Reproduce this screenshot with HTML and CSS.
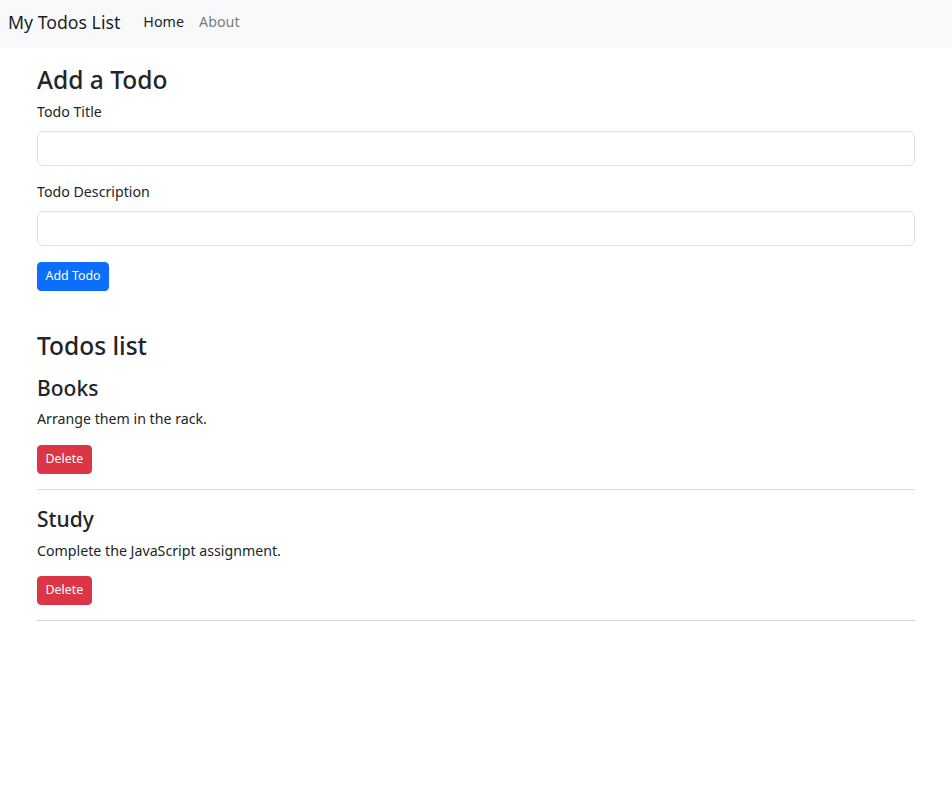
FILE: index.html
```html
<!DOCTYPE html>
<html lang="en">
<head>
<meta charset="utf-8">
<title>My Todos List</title>
<link rel="stylesheet" href="styles.css">
</head>
<body>
<nav class="navbar">
  <a class="brand" href="#">My Todos List</a>
  <ul class="nav-links">
    <li><a class="nav-link active" href="#">Home</a></li>
    <li><a class="nav-link" href="#">About</a></li>
  </ul>
</nav>
<main class="container">
  <section class="add-form">
    <h3 class="title">Add a Todo</h3>
    <form>
      <div class="field">
        <label class="label" for="title">Todo Title</label>
        <input class="input" id="title" type="text">
      </div>
      <div class="field">
        <label class="label" for="desc">Todo Description</label>
        <input class="input" id="desc" type="text">
      </div>
      <button type="button" class="btn btn-primary add-btn">Add Todo</button>
    </form>
  </section>
  <section class="todos">
    <h3 class="title">Todos list</h3>
    <div class="todo">
      <h4 class="todo-title">Books</h4>
      <p class="todo-desc">Arrange them in the rack.</p>
      <button type="button" class="btn btn-danger">Delete</button>
      <hr class="divider">
    </div>
    <div class="todo">
      <h4 class="todo-title">Study</h4>
      <p class="todo-desc">Complete the JavaScript assignment.</p>
      <button type="button" class="btn btn-danger">Delete</button>
      <hr class="divider">
    </div>
  </section>
</main>
</body>
</html>
```
FILE: styles.css
```css
* { box-sizing: border-box; }
html, body { margin: 0; padding: 0; }
body {
  font-family: "Noto Sans", "Open Sans", sans-serif;
  font-size: 14.2px;
  line-height: 22.5px;
  color: #212529;
  background: #fff;
}
.navbar {
  height: 48px;
  background: #f8f9fa;
  display: flex;
  align-items: center;
  padding: 0 8px 4px;
}
.brand {
  font-size: 17.7px;
  color: rgba(0,0,0,.9);
  text-decoration: none;
  margin-right: 23px;
}
.nav-links {
  list-style: none;
  display: flex;
  margin: 0;
  padding: 0;
  gap: 15px;
}
.nav-link {
  display: block;
  font-size: 14.3px;
  text-decoration: none;
  color: rgba(0,0,0,.55);
}
.nav-link.active { color: rgba(0,0,0,.9); }
.container {
  padding: 16px 37px 15px;
}
.title {
  font-size: 24.5px;
  font-weight: 500;
  line-height: 31.5px;
  margin: 0 0 5.5px;
}
.field { margin-bottom: 15px; }
.field + .field { margin-top: 1px; }
.label {
  display: block;
  margin-bottom: 7.5px;
}
.input {
  display: block;
  width: 100%;
  height: 35px;
  border: 1px solid #dee2e6;
  border-radius: 6px;
  padding: 5px 11px;
  font: inherit;
}
.btn {
  font-family: inherit;
  font-size: 12.4px;
  line-height: 1.5;
  border: 1px solid transparent;
  border-radius: 4px;
  padding: 3px 7.5px;
  color: #fff;
  height: 29px;
}
.add-btn { margin-top: 1px; }
.btn-primary { background: #0d6efd; border-color: #0d6efd; }
.btn-danger { background: #dc3545; border-color: #dc3545; }
.todos { margin-top: 39px; }
.todos > .title { margin-bottom: 13px; }
.todo-title {
  font-size: 21px;
  font-weight: 500;
  line-height: 27px;
  margin: 0 0 6.5px;
}
.todo-desc { margin: 0 0 14px; }
.divider {
  border: 0;
  border-top: 1px solid #d9d9d9;
  margin: 15px 0 16.5px;
}
```
